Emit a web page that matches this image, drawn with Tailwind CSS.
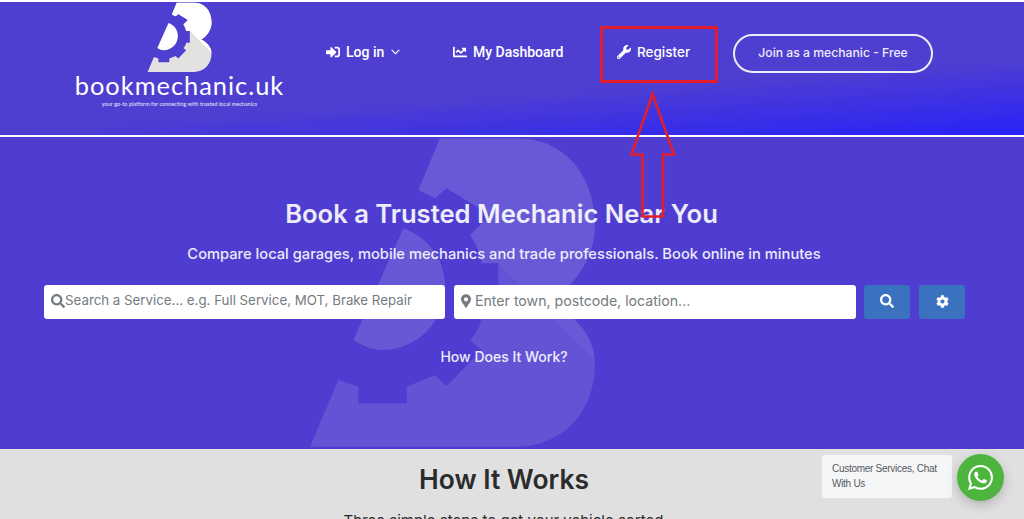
<!doctype html>
<html lang="en">
<head>
<meta charset="utf-8">
<title>bookmechanic.uk</title>
<script src="https://cdn.jsdelivr.net/npm/@tailwindcss/browser@4"></script>
</head>
<body class="relative h-[519px] w-[1024px] overflow-hidden bg-white pt-[2px] font-['Inter',sans-serif]">
<svg width="0" height="0" class="absolute">
  <defs>
    <path id="bshape" d="M60 950L145 750L205 770V820H350V770L435 735L470 768L575 660L540 630C560 610 572 585 575 560H625V400H575C570 370 558 340 540 315L600 255L470 175L435 205L385 180L450 25H680C815 25 915 125 915 290C915 380 860 460 780 515C860 560 915 620 915 700C915 850 815 950 680 950Z"/>
    <path id="dshape" d="M340 295L190 630C220 650 250 660 275 660C380 660 465 575 465 470C465 385 410 320 340 295Z"/>
    <clipPath id="topclip"><path d="M0 0H960V735L625 400H0Z"/></clipPath>
  </defs>
</svg>

<header class="flex h-[133px] bg-[linear-gradient(176deg,#4f3fd0_62%,#2822f8_100%)] text-white">
  <div class="flex w-[326px] flex-col items-center pl-[33px]">
    <svg class="-mt-[4px] ml-[-2px] shrink-0" width="72" height="74" viewBox="0 -40 960 990">
      <use href="#bshape" fill="#e3e2e1"/>
      <use href="#bshape" fill="#ffffff" clip-path="url(#topclip)"/>
      <use href="#dshape" fill="#ffffff"/>
    </svg>
    <div class="mt-[-1px] font-['Lato',sans-serif] text-[25.4px] leading-[28px] font-normal tracking-[1px] whitespace-nowrap">bookmechanic.uk</div>
    <div class="mt-[1px] font-['Lato',sans-serif] text-[5.35px] leading-[8px] tracking-[0.1px] whitespace-nowrap text-white/90">your go-to platform for connecting with trusted local mechanics</div>
  </div>

  <nav class="flex h-[100px] flex-1 items-start pt-[32px]">
    <a class="flex h-[36px] w-[127px] items-center font-['Roboto',sans-serif] text-[14px] font-medium">
      <svg class="mr-[6px]" width="14" height="14" viewBox="0 0 512 512" fill="currentColor"><path d="M416 448h-84c-6.6 0-12-5.4-12-12v-40c0-6.6 5.4-12 12-12h84c17.7 0 32-14.3 32-32V160c0-17.7-14.3-32-32-32h-84c-6.6 0-12-5.4-12-12V76c0-6.6 5.4-12 12-12h84c53 0 96 43 96 96v192c0 53-43 96-96 96zm-47-201L201 79c-15-15-41-4.5-41 17v96H24c-13.3 0-24 10.7-24 24v96c0 13.3 10.7 24 24 24h136v96c0 21.5 26 32 41 17l168-168c9.3-9.4 9.3-24.6 0-34z"/></svg>
      Log in
      <svg class="ml-[7px]" width="9" height="6" viewBox="0 0 9 6" fill="none" stroke="currentColor" stroke-width="1.2"><path d="M.7.9 4.5 4.7 8.3.9"/></svg>
    </a>
    <a class="flex h-[36px] w-[164px] items-center font-['Roboto',sans-serif] text-[14px] font-medium">
      <svg class="mr-[6px]" width="14" height="14" viewBox="0 0 512 512" fill="currentColor"><path d="M496 384H64V80c0-8.84-7.16-16-16-16H16C7.16 64 0 71.16 0 80v336c0 17.67 14.33 32 32 32h464c8.84 0 16-7.16 16-16v-32c0-8.84-7.16-16-16-16zM464 96H345.94c-21.38 0-32.09 25.85-16.97 40.97l32.4 32.4L288 242.75l-73.37-73.37c-12.5-12.5-32.76-12.5-45.25 0l-68.69 68.69c-6.25 6.25-6.25 16.38 0 22.63l22.62 22.62c6.25 6.25 16.38 6.25 22.63 0L192 237.25l73.37 73.37c12.5 12.5 32.76 12.5 45.25 0l96-96 32.4 32.4c15.12 15.12 40.97 4.41 40.97-16.97V112c0-8.84-7.16-16-16-16z"/></svg>
      My Dashboard
    </a>
    <a class="flex h-[36px] w-[116px] items-center text-[13.5px] font-medium">
      <svg class="mr-[6px]" width="14" height="14" viewBox="0 0 512 512" fill="currentColor"><path d="M507.73 109.1c-2.24-9.03-13.54-12.09-20.12-5.51l-74.36 74.36-67.88-11.31-11.31-67.88 74.36-74.36c6.62-6.62 3.43-17.9-5.66-20.16-47.38-11.74-99.55.91-136.58 37.93-39.64 39.64-50.55 97.1-34.05 147.2L18.74 402.76c-24.99 24.99-24.99 65.51 0 90.5 24.99 24.99 65.51 24.99 90.5 0l213.21-213.21c50.12 16.71 107.47 5.68 147.37-34.22 37.07-37.07 49.7-89.32 37.91-136.73zM64 472c-13.25 0-24-10.75-24-24 0-13.26 10.75-24 24-24s24 10.74 24 24c0 13.25-10.75 24-24 24z"/></svg>
      Register
    </a>
    <a class="flex h-[39px] w-[200px] items-center justify-center rounded-full border-2 border-white/90 pb-[1px] text-[12.2px] font-medium whitespace-nowrap text-white/90">Join as a mechanic - Free</a>
  </nav>
</header>
<div class="h-[2px] bg-white"></div>

<main class="relative h-[312px] overflow-hidden bg-[#4e3dd0] text-white">
  <svg class="absolute top-[-7px] left-[290px]" width="320" height="330" viewBox="0 0 960 990">
    <use href="#bshape" fill="#ffffff" fill-opacity="0.12"/>
    <use href="#bshape" fill="#ffffff" fill-opacity="0.035" clip-path="url(#topclip)"/>
    <use href="#dshape" fill="#ffffff" fill-opacity="0.14"/>
  </svg>
  <div class="relative flex flex-col items-center">
    <h1 class="mt-[60px] h-[34px] pr-[21px] text-[25.6px] leading-[34px] font-semibold text-white/90">Book a Trusted Mechanic Near You</h1>
    <p class="mt-[11px] h-[24px] pr-[16px] text-[14.7px] leading-[24px] font-medium text-white/90">Compare local garages, mobile mechanics and trade professionals. Book online in minutes</p>
    <form class="mt-[19px] flex w-full gap-[9px] pl-[44px]">
      <div class="flex h-[34px] w-[401px] items-center rounded-[3px] bg-white pb-[3px] pl-[7px] text-[13.3px] text-[#757b80]">
        <svg class="shrink-0" width="14" height="14" viewBox="0 0 512 512" fill="currentColor"><path d="M505 442.7L405.3 343c-4.5-4.5-10.6-7-17-7H372c27.6-35.3 44-79.7 44-128C416 93.1 322.9 0 208 0S0 93.1 0 208s93.1 208 208 208c48.3 0 92.7-16.4 128-44v16.3c0 6.4 2.5 12.5 7 17l99.7 99.7c9.4 9.4 24.6 9.4 33.9 0l28.3-28.3c9.4-9.4 9.4-24.6.1-34zM208 336c-70.7 0-128-57.2-128-128 0-70.7 57.2-128 128-128 70.7 0 128 57.2 128 128 0 70.7-57.2 128-128 128z"/></svg>
        <span class="whitespace-nowrap">Search a Service... e.g. Full Service, MOT, Brake Repair</span>
      </div>
      <div class="flex h-[34px] w-[402px] items-center rounded-[3px] bg-white pb-[3px] pl-[7px] text-[14.15px] text-[#757b80]">
        <svg class="mr-[4px] shrink-0" width="10" height="14" viewBox="0 0 384 512" fill="currentColor"><path d="M172.268 501.67C26.97 291.031 0 269.413 0 192 0 85.961 85.961 0 192 0s192 85.961 192 192c0 77.413-26.97 99.031-172.268 309.67-9.535 13.774-29.93 13.773-39.464 0zM192 272c44.183 0 80-35.817 80-80s-35.817-80-80-80-80 35.817-80 80 35.817 80 80 80z"/></svg>
        <span class="whitespace-nowrap">Enter town, postcode, location...</span>
      </div>
      <div class="ml-[-1px] flex h-[34px] w-[46px] items-center justify-center rounded-[3px] bg-[#3a72c0] pb-[2px]">
        <svg width="14" height="14" viewBox="0 0 512 512" fill="currentColor"><path d="M505 442.7L405.3 343c-4.5-4.5-10.6-7-17-7H372c27.6-35.3 44-79.7 44-128C416 93.1 322.9 0 208 0S0 93.1 0 208s93.1 208 208 208c48.3 0 92.7-16.4 128-44v16.3c0 6.4 2.5 12.5 7 17l99.7 99.7c9.4 9.4 24.6 9.4 33.9 0l28.3-28.3c9.4-9.4 9.4-24.6.1-34zM208 336c-70.7 0-128-57.2-128-128 0-70.7 57.2-128 128-128 70.7 0 128 57.2 128 128 0 70.7-57.2 128-128 128z"/></svg>
      </div>
      <div class="flex h-[34px] w-[46px] items-center justify-center rounded-[3px] bg-[#3a72c0] pb-[2px]">
        <svg width="13" height="13" viewBox="0 0 512 512" fill="currentColor"><path d="M487.4 315.7l-42.6-24.6c4.3-23.2 4.3-47 0-70.2l42.6-24.6c4.9-2.8 7.1-8.6 5.5-14-11.1-35.6-30-67.8-54.7-94.6-3.8-4.1-10-5.1-14.8-2.3L380.8 110c-17.9-15.4-38.5-27.3-60.8-35.1V25.8c0-5.6-3.9-10.5-9.4-11.7-36.7-8.2-74.3-7.8-109.2 0-5.5 1.2-9.4 6.1-9.4 11.7V75c-22.2 7.9-42.8 19.8-60.8 35.1L88.7 85.5c-4.9-2.8-11-1.9-14.8 2.3-24.7 26.7-43.6 58.9-54.7 94.6-1.7 5.4.6 11.2 5.5 14L67.3 221c-4.3 23.2-4.3 47 0 70.2l-42.6 24.6c-4.9 2.8-7.1 8.6-5.5 14 11.1 35.6 30 67.8 54.7 94.6 3.8 4.1 10 5.1 14.8 2.3l42.6-24.6c17.9 15.4 38.5 27.3 60.8 35.1v49.2c0 5.6 3.9 10.5 9.4 11.7 36.7 8.2 74.3 7.8 109.2 0 5.5-1.2 9.4-6.1 9.4-11.7v-49.2c22.2-7.9 42.8-19.8 60.8-35.1l42.6 24.6c4.9 2.8 11 1.9 14.8-2.3 24.7-26.7 43.6-58.9 54.7-94.6 1.5-5.5-.7-11.3-5.6-14.1zM256 336c-44.1 0-80-35.9-80-80s35.9-80 80-80 80 35.9 80 80-35.9 80-80 80z"/></svg>
      </div>
    </form>
    <a class="mt-[27px] h-[22px] pr-[16px] text-[14px] leading-[22px] font-medium text-white/90">How Does It Work?</a>
  </div>
</main>

<section class="flex h-[70px] flex-col items-center bg-[#e0e0e0] text-[#2b2b2b]">
  <h2 class="mt-[12px] h-[36px] pr-[16px] text-[26.4px] leading-[36px] font-semibold">How It Works</h2>
  <p class="mt-[12px] pr-[17px] text-[15px] leading-[24px] whitespace-nowrap">Three simple steps to get your vehicle sorted</p>
</section>

<div class="absolute top-[455px] left-[822px] h-[43px] w-[130px] rounded-[3px] bg-[#f5f6f8] pt-[6px] pl-[10px] font-['Liberation_Sans',sans-serif] text-[10px] leading-[15px] tracking-[-0.28px] text-[#555a60]">Customer Services, Chat<br>With Us</div>
<div class="absolute top-[454px] left-[957px] flex h-[47px] w-[47px] items-center justify-center rounded-full bg-[#4db53d] shadow-[0_4px_12px_rgba(0,0,0,0.2)]">
  <svg width="25" height="25" viewBox="0 0 24 24" fill="#fff"><path d="M17.472 14.382c-.297-.149-1.758-.867-2.03-.967-.273-.099-.471-.148-.67.15-.197.297-.767.966-.94 1.164-.173.199-.347.223-.644.075-.297-.15-1.255-.463-2.39-1.475-.883-.788-1.48-1.761-1.653-2.059-.173-.297-.018-.458.13-.606.134-.133.298-.347.446-.52.149-.174.198-.298.298-.497.099-.198.05-.371-.025-.52-.075-.149-.669-1.612-.916-2.207-.242-.579-.487-.5-.669-.51-.173-.008-.371-.01-.57-.01-.198 0-.52.074-.792.372-.272.297-1.04 1.016-1.04 2.479 0 1.462 1.065 2.875 1.213 3.074.149.198 2.096 3.2 5.077 4.487.709.306 1.262.489 1.694.625.712.227 1.36.195 1.871.118.571-.085 1.758-.719 2.006-1.413.248-.694.248-1.289.173-1.413-.074-.124-.272-.198-.57-.347m-5.421 7.403h-.004a9.87 9.87 0 01-5.031-1.378l-.361-.214-3.741.982.998-3.648-.235-.374a9.86 9.86 0 01-1.51-5.26c.001-5.45 4.436-9.884 9.888-9.884 2.64 0 5.122 1.03 6.988 2.898a9.825 9.825 0 012.893 6.994c-.003 5.45-4.437 9.884-9.885 9.884m8.413-18.297A11.815 11.815 0 0012.05 0C5.495 0 .16 5.335.157 11.892c0 2.096.547 4.142 1.588 5.945L.057 24l6.305-1.654a11.882 11.882 0 005.683 1.448h.005c6.554 0 11.89-5.335 11.893-11.893a11.821 11.821 0 00-3.48-8.413z"/></svg>
</div>

<!-- annotation drawn over the screenshot -->
<svg class="pointer-events-none absolute top-0 left-0" width="1024" height="519" viewBox="0 0 1024 519" fill="none" stroke="#e21e2e" stroke-width="2.6">
  <rect x="601.5" y="27.5" width="115" height="54" stroke-width="3"/>
  <path d="M652.5 94 631.5 154.5H642.5V216.5H663V154.5H674Z"/>
</svg>
</body>
</html>
